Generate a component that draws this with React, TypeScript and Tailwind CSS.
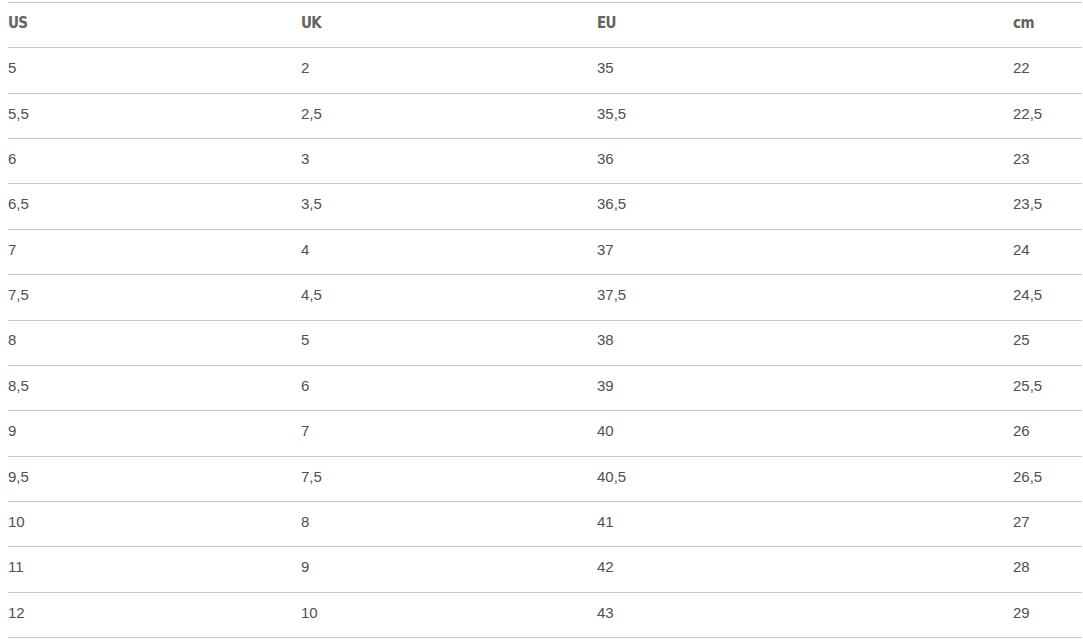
import React from "react";

const rows: string[][] = [
  ["5", "2", "35", "22"],
  ["5,5", "2,5", "35,5", "22,5"],
  ["6", "3", "36", "23"],
  ["6,5", "3,5", "36,5", "23,5"],
  ["7", "4", "37", "24"],
  ["7,5", "4,5", "37,5", "24,5"],
  ["8", "5", "38", "25"],
  ["8,5", "6", "39", "25,5"],
  ["9", "7", "40", "26"],
  ["9,5", "7,5", "40,5", "26,5"],
  ["10", "8", "41", "27"],
  ["11", "9", "42", "28"],
  ["12", "10", "43", "29"],
];

export default function App() {
  return (
    <div className="w-[1083px] h-[639px] bg-white pt-[2px] pl-[8px] pr-[1px]">
      <div className="border-t border-[#c9c9c9]">
        <div
          className="grid grid-cols-[293px_296px_416px_1fr] items-center h-[45.36px] border-b border-[#c9c9c9] text-[#636363] font-bold text-[15px] tracking-[-0.6px] pb-[4px]"
          style={{ fontFamily: '"DejaVu Sans Condensed", "DejaVu Sans", sans-serif', fontStretch: "condensed" }}
        >
          <div>US</div>
          <div>UK</div>
          <div>EU</div>
          <div>cm</div>
        </div>
        {rows.map((r, i) => (
          <div
            key={i}
            className="grid grid-cols-[293px_296px_416px_1fr] items-center h-[45.36px] border-b border-[#c9c9c9] text-[#505050] text-[15px] pb-[4px]"
            style={{ fontFamily: '"Liberation Sans", Arial, sans-serif' }}
          >
            {r.map((c, j) => (
              <div key={j}>{c}</div>
            ))}
          </div>
        ))}
      </div>
    </div>
  );
}
